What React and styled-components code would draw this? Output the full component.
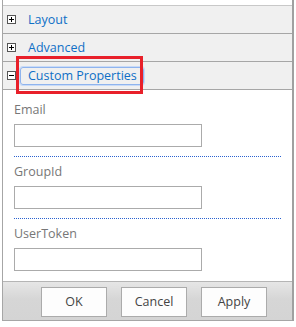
import React from "react";
import styled, { createGlobalStyle } from "styled-components";

const Global = createGlobalStyle`
  html, body { margin: 0; padding: 0; background: #fff; }
  body { font-family: "Open Sans", "Noto Sans", sans-serif; }
`;

const Page = styled.div`
  position: relative;
  width: 296px;
  height: 327px;
  overflow: hidden;
`;

const Panel = styled.div`
  margin-left: 2px;
  width: 289px;
  border-left: 1px solid #a6a6a6;
  border-right: 2px solid #a0a0a0;
  display: flex;
  flex-direction: column;
`;

const TopSpace = styled.div`
  height: 5px;
  background: #fff;
`;

const Header = styled.div`
  height: 27px;
  border-top: 1px solid ${(p) => (p.$first ? "#c8c8c8" : "#a6a6a6")};
  border-bottom: ${(p) => (p.$last ? "1px solid #a6a6a6" : "none")};
  background: #f0f0f0;
  display: flex;
  align-items: center;
  padding-left: 4px;
`;

const ToggleBox = styled.span`
  width: 9px;
  height: 9px;
  box-sizing: border-box;
  border: 1px solid #555;
  background: #fff;
  position: relative;
  flex: none;
  &::before {
    content: "";
    position: absolute;
    left: 1px;
    right: 1px;
    top: 3px;
    height: 1px;
    background: #000;
  }
  &::after {
    content: "";
    display: ${(p) => (p.$open ? "none" : "block")};
    position: absolute;
    top: 1px;
    bottom: 1px;
    left: 3px;
    width: 1px;
    background: #000;
  }
`;

const HeaderLink = styled.span`
  margin-left: ${(p) => (p.$focus ? "4px" : "12px")};
  padding: ${(p) => (p.$focus ? "0 6px 0 7px" : "0")};
  height: ${(p) => (p.$focus ? "16px" : "auto")};
  line-height: 16px;
  border: ${(p) => (p.$focus ? "1px solid #8fb4ee" : "none")};
  border-radius: 3px;
  box-shadow: ${(p) => (p.$focus ? "0 0 0 1px #c9dbf7" : "none")};
  color: #0f6fc6;
  font-size: 12.5px;
  white-space: nowrap;
`;

const Body = styled.div`
  background: #fff;
  padding: 5px 9px 10px 11px;
  display: flex;
  flex-direction: column;
`;

const Field = styled.div`
  display: flex;
  flex-direction: column;
  padding-top: ${(p) => (p.$first ? "6px" : "6px")};
`;

const Label = styled.label`
  color: #777;
  font-size: 12.5px;
  line-height: 18px;
  margin-bottom: 5px;
`;

const Input = styled.input`
  box-sizing: border-box;
  width: 188px;
  height: 23px;
  margin: 0;
  border: 1px solid #ababab;
  background: #fff;
  padding: 2px 4px;
  font: inherit;
  outline: none;
`;

const Separator = styled.div`
  margin-top: 9px;
  height: 1px;
  width: 268px;
  background-image: linear-gradient(to right, #2b62d0 50%, transparent 50%);
  background-size: 2px 1px;
  background-repeat: repeat-x;
`;

const Footer = styled.div`
  height: 38px;
  border-top: 1px solid #b5b5b5;
  border-bottom: 1px solid #a6a6a6;
  background: linear-gradient(#e6e6e6, #d6d6d6 45%, #d4d4d4);
  display: flex;
  align-items: center;
  justify-content: flex-end;
  gap: 14px;
  padding-right: 25px;
`;

const Button = styled.button`
  box-sizing: border-box;
  width: 66px;
  height: 30px;
  margin-top: 1px;
  border: 1px solid #ababab;
  background: #fdfdfd;
  color: #444;
  font-family: "Open Sans", "Noto Sans", sans-serif;
  font-size: 12.5px;
  padding: 0;
`;

const Annotation = styled.div`
  position: absolute;
  left: 16px;
  top: 56px;
  width: 127px;
  height: 38px;
  box-sizing: border-box;
  border: 3px solid #e8202a;
  pointer-events: none;
`;

const fields = ["Email", "GroupId", "UserToken"];

export default function App() {
  return (
    <Page>
      <Global />
      <Panel>
        <TopSpace />
        <Header $first>
          <ToggleBox />
          <HeaderLink>Layout</HeaderLink>
        </Header>
        <Header>
          <ToggleBox />
          <HeaderLink>Advanced</HeaderLink>
        </Header>
        <Header $last>
          <ToggleBox $open />
          <HeaderLink $focus>Custom Properties</HeaderLink>
        </Header>
        <Body>
          {fields.map((f, i) => (
            <React.Fragment key={f}>
              <Field $first={i === 0}>
                <Label>{f}</Label>
                <Input type="text" />
              </Field>
              {i < fields.length - 1 && <Separator />}
            </React.Fragment>
          ))}
        </Body>
        <Footer>
          <Button>OK</Button>
          <Button>Cancel</Button>
          <Button>Apply</Button>
        </Footer>
      </Panel>
      <Annotation />
    </Page>
  );
}
